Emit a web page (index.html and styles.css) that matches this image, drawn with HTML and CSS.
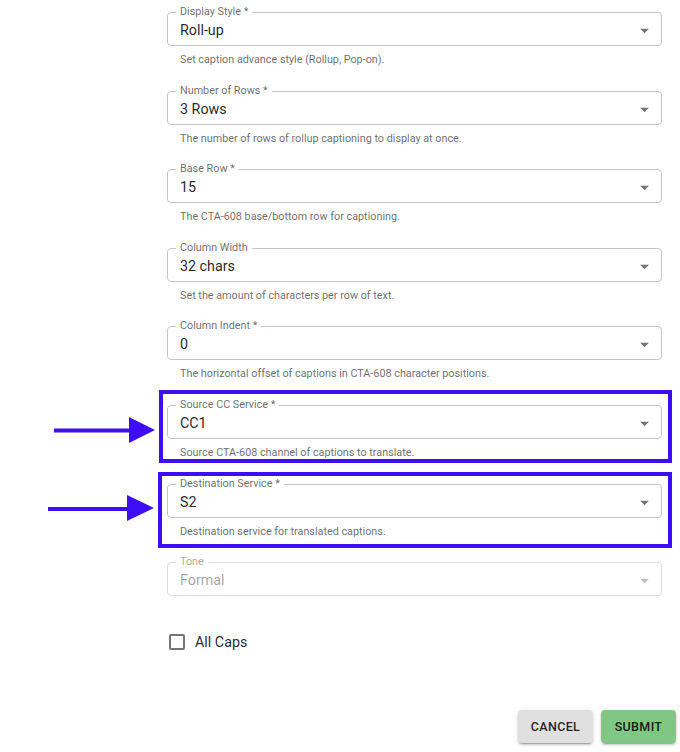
FILE: index.html
```html
<!DOCTYPE html>
<html lang="en">
<head>
<meta charset="utf-8">
<title>Caption settings</title>
<link rel="stylesheet" href="styles.css">
</head>
<body>
<div class="page">
  <svg class="arrows" width="680" height="752" viewBox="0 0 680 752" aria-hidden="true">
    <line x1="54" y1="430.5" x2="132" y2="430.5" stroke="#3d0ef5" stroke-width="4"/>
    <polygon points="129,417 155,430 129,443" fill="#3d0ef5"/>
    <line x1="48" y1="509" x2="130" y2="509" stroke="#3d0ef5" stroke-width="4"/>
    <polygon points="127,495 154,508 127,521" fill="#3d0ef5"/>
  </svg>

  <form class="form">
    <div class="field">
      <div class="box"><span class="label">Display Style *</span><span class="value">Roll-up</span><svg class="caret" viewBox="0 0 24 24"><path d="M7 10l5 5 5-5z"/></svg></div>
      <div class="helper">Set caption advance style (Rollup, Pop-on).</div>
    </div>
    <div class="field">
      <div class="box"><span class="label">Number of Rows *</span><span class="value">3 Rows</span><svg class="caret" viewBox="0 0 24 24"><path d="M7 10l5 5 5-5z"/></svg></div>
      <div class="helper">The number of rows of rollup captioning to display at once.</div>
    </div>
    <div class="field">
      <div class="box"><span class="label">Base Row *</span><span class="value">15</span><svg class="caret" viewBox="0 0 24 24"><path d="M7 10l5 5 5-5z"/></svg></div>
      <div class="helper">The CTA-608 base/bottom row for captioning.</div>
    </div>
    <div class="field">
      <div class="box"><span class="label">Column Width</span><span class="value">32 chars</span><svg class="caret" viewBox="0 0 24 24"><path d="M7 10l5 5 5-5z"/></svg></div>
      <div class="helper">Set the amount of characters per row of text.</div>
    </div>
    <div class="field">
      <div class="box"><span class="label">Column Indent *</span><span class="value">0</span><svg class="caret" viewBox="0 0 24 24"><path d="M7 10l5 5 5-5z"/></svg></div>
      <div class="helper">The horizontal offset of captions in CTA-608 character positions.</div>
    </div>
    <div class="field hl hl-source">
      <div class="box"><span class="label">Source CC Service *</span><span class="value">CC1</span><svg class="caret" viewBox="0 0 24 24"><path d="M7 10l5 5 5-5z"/></svg></div>
      <div class="helper">Source CTA-608 channel of captions to translate.</div>
    </div>
    <div class="field hl hl-dest">
      <div class="box"><span class="label">Destination Service *</span><span class="value">S2</span><svg class="caret" viewBox="0 0 24 24"><path d="M7 10l5 5 5-5z"/></svg></div>
      <div class="helper">Destination service for translated captions.</div>
    </div>
    <div class="field disabled">
      <div class="box"><span class="label">Tone</span><span class="value">Formal</span><svg class="caret" viewBox="0 0 24 24"><path d="M7 10l5 5 5-5z"/></svg></div>
    </div>

    <label class="check">
      <span class="checkbox"></span>
      <span class="check-text">All Caps</span>
    </label>
  </form>

  <div class="actions">
    <button type="button" class="btn btn-cancel">Cancel</button>
    <button type="button" class="btn btn-submit">Submit</button>
  </div>
</div>
</body>
</html>
```
FILE: styles.css
```css
* { box-sizing: border-box; }

html, body {
  margin: 0;
  padding: 0;
  background: #ffffff;
}

body {
  font-family: Roboto, "Liberation Sans", Arial, sans-serif;
  color: rgba(0, 0, 0, 0.87);
}

.page {
  position: relative;
  width: 680px;
  height: 752px;
  overflow: hidden;
}

.arrows {
  position: absolute;
  left: 0;
  top: 0;
  pointer-events: none;
}

.form {
  display: flex;
  flex-direction: column;
  width: 495px;
  margin-left: 167px;
  padding-top: 12px;
}

.field {
  position: relative;
  margin-bottom: 23.6px;
}

.box {
  position: relative;
  height: 34px;
  border: 1px solid #c4c4c4;
  border-radius: 4px;
  display: flex;
  align-items: center;
  padding: 2px 0 0 12px;
}

.label {
  position: absolute;
  left: 8px;
  top: -7px;
  padding: 0 4px;
  background: #ffffff;
  font-size: 10.8px;
  line-height: 12px;
  color: rgba(0, 0, 0, 0.6);
  white-space: nowrap;
}

.value {
  font-size: 14.3px;
  line-height: 18px;
  color: rgba(0, 0, 0, 0.87);
}

.caret {
  position: absolute;
  right: 6px;
  top: 7px;
  width: 21px;
  height: 21px;
  fill: rgba(0, 0, 0, 0.54);
}

.helper {
  margin-top: 7px;
  padding-left: 13px;
  font-size: 10.8px;
  line-height: 14px;
  color: rgba(0, 0, 0, 0.6);
}

.hl::after {
  content: "";
  position: absolute;
  border: 4px solid #3d0ef5;
  pointer-events: none;
}

.hl-source::after {
  top: -15px;
  bottom: -3px;
  left: -8px;
  right: -10px;
}

.hl-dest::after {
  top: -12px;
  bottom: -9px;
  left: -9px;
  right: -10px;
}

.disabled .box { border-color: #dcdcdc; }
.disabled .label { color: rgba(0, 0, 0, 0.38); }
.disabled .value { color: rgba(0, 0, 0, 0.38); }
.disabled .caret { fill: rgba(0, 0, 0, 0.26); }

.check {
  display: flex;
  align-items: center;
  height: 24px;
  margin-top: 10px;
  padding-left: 2px;
}

.checkbox {
  width: 16px;
  height: 16px;
  border: 2px solid #757575;
  border-radius: 2px;
}

.check-text {
  margin-left: 10px;
  font-size: 14.3px;
  color: rgba(0, 0, 0, 0.87);
}

.actions {
  display: flex;
  justify-content: flex-end;
  gap: 8px;
  padding-right: 4px;
  margin-top: 56.5px;
}

.btn {
  height: 33px;
  width: 75px;
  border: none;
  border-radius: 4px;
  font-family: Roboto, "Liberation Sans", Arial, sans-serif;
  font-size: 12.5px;
  font-weight: 500;
  letter-spacing: 0.35px;
  text-transform: uppercase;
  color: rgba(0, 0, 0, 0.87);
  box-shadow: 0 3px 1px -2px rgba(0, 0, 0, 0.2), 0 2px 2px 0 rgba(0, 0, 0, 0.14), 0 1px 5px 0 rgba(0, 0, 0, 0.12);
}

.btn-cancel { background: #e0e0e0; }
.btn-submit { background: #81c784; }
```
